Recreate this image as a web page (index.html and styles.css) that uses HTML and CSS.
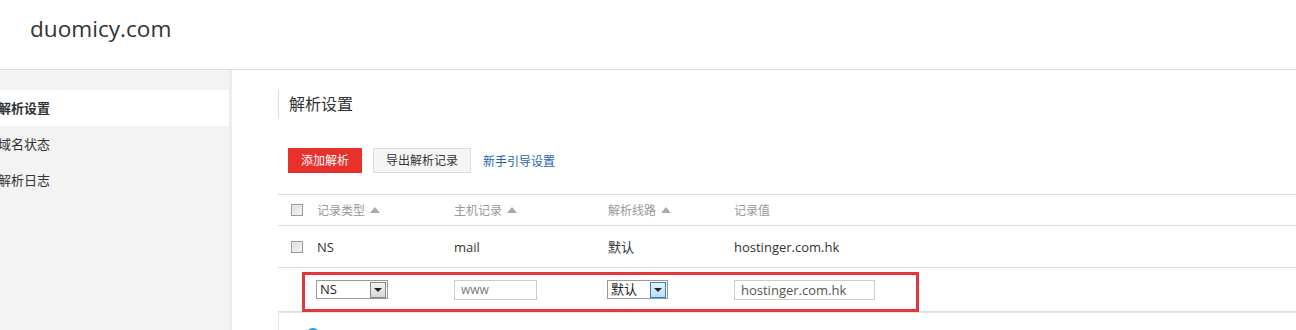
FILE: index.html
```html
<!DOCTYPE html>
<html lang="zh-CN">
<head>
    <meta charset="UTF-8">
    <meta name="viewport" content="width=device-width, initial-scale=1.0">
    <title>解析设置</title>

    <link rel="stylesheet" href="styles.css">
</head>

<body>
    <div class="top">
        <span class="logo">duomicy.com</span>
    </div>

    <div class="page">
        <div class="side">
            <ul>
                <li><a class="active" href="javascript:;">解析设置</a></li>
                <li><a href="javascript:;">域名状态</a></li>
                <li><a href="javascript:;">解析日志</a></li>
            </ul>
        </div>

        <div class="main">
            <h2 class="title">解析设置</h2>

            <div class="toolbar">
                <a class="btn btn-red" href="javascript:;">添加解析</a>
                <a class="btn" href="javascript:;">导出解析记录</a>
                <a class="link" href="javascript:;">新手引导设置</a>
            </div>

            <div class="records">
                <div class="row head">
                    <span class="cell"><i class="check"></i></span>
                    <span class="cell">记录类型 <em class="sort"></em></span>
                    <span class="cell">主机记录 <em class="sort"></em></span>
                    <span class="cell">解析线路 <em class="sort"></em></span>
                    <span class="cell">记录值</span>
                </div>
                <div class="row">
                    <span class="cell"><i class="check"></i></span>
                    <span class="cell">NS</span>
                    <span class="cell">mail</span>
                    <span class="cell">默认</span>
                    <span class="cell">hostinger.com.hk</span>
                </div>
                <div class="row edit">
                    <span class="cell"></span>
                    <span class="cell">
                        <span class="sel sel-type"><span class="sel-val">NS</span><span class="sel-btn"></span></span>
                    </span>
                    <span class="cell"><input class="ipt ipt-host" type="text" placeholder="www"></span>
                    <span class="cell">
                        <span class="sel sel-line"><span class="sel-val">默认</span><span class="sel-btn hover"></span></span>
                    </span>
                    <span class="cell"><input class="ipt ipt-value" type="text" value="hostinger.com.hk"></span>
                    <!-- 标注框 -->
                    <div class="mark"></div>
                </div>
            </div>

            <div class="tips">
                <i class="tips-icon"></i>
            </div>
        </div>
    </div>
</body>
</html>
```

FILE: styles.css
```css
* {
  margin: 0;
  padding: 0;
  box-sizing: border-box;
}

body {
  font-family: "Open Sans", "Noto Sans CJK SC", sans-serif;
  font-size: 13px;
  color: #333;
  background: #fff;
  overflow: hidden;
}

.top {
  height: 70px;
  padding-left: 30px;
  border-bottom: 1px solid #ddd;
}

.top .logo {
  display: block;
  padding-top: 14px;
  font-size: 22.6px;
  line-height: 30px;
  color: #333;
}

.page {
  display: flex;
  height: 260px;
  overflow: hidden;
}

.side {
  width: 232px;
  flex: none;
  background: #f3f3f3;
  border-right: 3px solid #ececec;
  padding-top: 20px;
}

.side ul {
  list-style: none;
}

.side li a {
  display: block;
  height: 36px;
  line-height: 36px;
  margin-left: -2px;
  color: #333;
  text-decoration: none;
  font-size: 13px;
}

.side li a.active {
  background: #fff;
  font-weight: bold;
}

.main {
  flex: 1;
  padding-left: 46px;
}

.title {
  margin-top: 19px;
  height: 30px;
  line-height: 30px;
  padding-left: 10px;
  border-left: 1px solid #ddd;
  font-size: 16px;
  font-weight: normal;
  color: #333;
}

.toolbar {
  display: flex;
  align-items: center;
  margin-top: 29px;
  padding-left: 10px;
}

.btn {
  display: inline-block;
  height: 25px;
  line-height: 23px;
  padding: 0 12px;
  border: 1px solid #ddd;
  background: #f5f5f5;
  color: #333;
  font-size: 12px;
  text-decoration: none;
  margin-right: 11px;
}

.btn-red {
  background: #e8302c;
  border-color: #e8302c;
  color: #fff;
}

.toolbar .link {
  margin-left: 1px;
  color: #1d64b0;
  font-size: 12px;
  text-decoration: none;
}

.records {
  margin-top: 21px;
  border-top: 1px solid #ddd;
}

.row {
  position: relative;
  display: grid;
  grid-template-columns: 39px 137px 154px 126px 1fr;
  align-items: center;
  height: 42px;
  border-bottom: 1px solid #ddd;
}

.row.head {
  height: 31px;
  color: #999;
  font-size: 12px;
}

.row.edit {
  height: 44px;
}

.cell {
  white-space: nowrap;
}

.row .cell:first-child {
  padding-left: 13px;
}

.check {
  display: block;
  width: 12px;
  height: 12px;
  border: 1px solid #999;
  background: linear-gradient(135deg, #d8d8d8, #f8f8f8);
  box-shadow: inset 0 0 0 1px #eee;
}

.sort {
  display: inline-block;
  width: 0;
  height: 0;
  margin-left: 2px;
  vertical-align: 2px;
  border-left: 5px solid transparent;
  border-right: 5px solid transparent;
  border-bottom: 6px solid #aaa;
}

.sel {
  display: flex;
  align-items: center;
  height: 19px;
  border: 1px solid #999;
  background: #fff;
  margin-left: -1px;
}

.sel-type {
  width: 72px;
}

.sel-line {
  width: 61px;
}

.sel-val {
  flex: 1;
  padding-left: 3px;
  line-height: 17px;
  font-size: 13px;
  color: #222;
}

.sel-btn {
  position: relative;
  width: 16px;
  height: 16px;
  margin-right: 1px;
  border: 1px solid #888;
  background: linear-gradient(#f2f2f2, #d8d8d8);
}

.sel-btn.hover {
  border-color: #3c7fb1;
  background: linear-gradient(#e3f3fd, #b9defa);
}

.sel-btn::after {
  content: "";
  position: absolute;
  left: 3px;
  top: 5px;
  border-left: 4px solid transparent;
  border-right: 4px solid transparent;
  border-top: 4px solid #222;
}

.ipt {
  display: block;
  height: 20px;
  padding: 0 6px;
  border: 1px solid #ccc;
  font-family: "Open Sans", "Noto Sans CJK SC", sans-serif;
  font-size: 12px;
  color: #555;
  outline: none;
}

.ipt::placeholder {
  color: #777;
}

.ipt-host {
  width: 83px;
}

.ipt-value {
  width: 141px;
  font-size: 13px;
}

.mark {
  position: absolute;
  left: 24px;
  top: 4px;
  width: 617px;
  height: 40px;
  border: 3px solid #e3363a;
  pointer-events: none;
}

.tips {
  height: 40px;
  border-left: 1px solid #e5e5e5;
  border-top: 1px solid #e5e5e5;
  padding: 15px 0 0 27px;
}

.tips-icon {
  display: block;
  width: 14px;
  height: 14px;
  border-radius: 50%;
  background: #2a9fd6;
}
```
